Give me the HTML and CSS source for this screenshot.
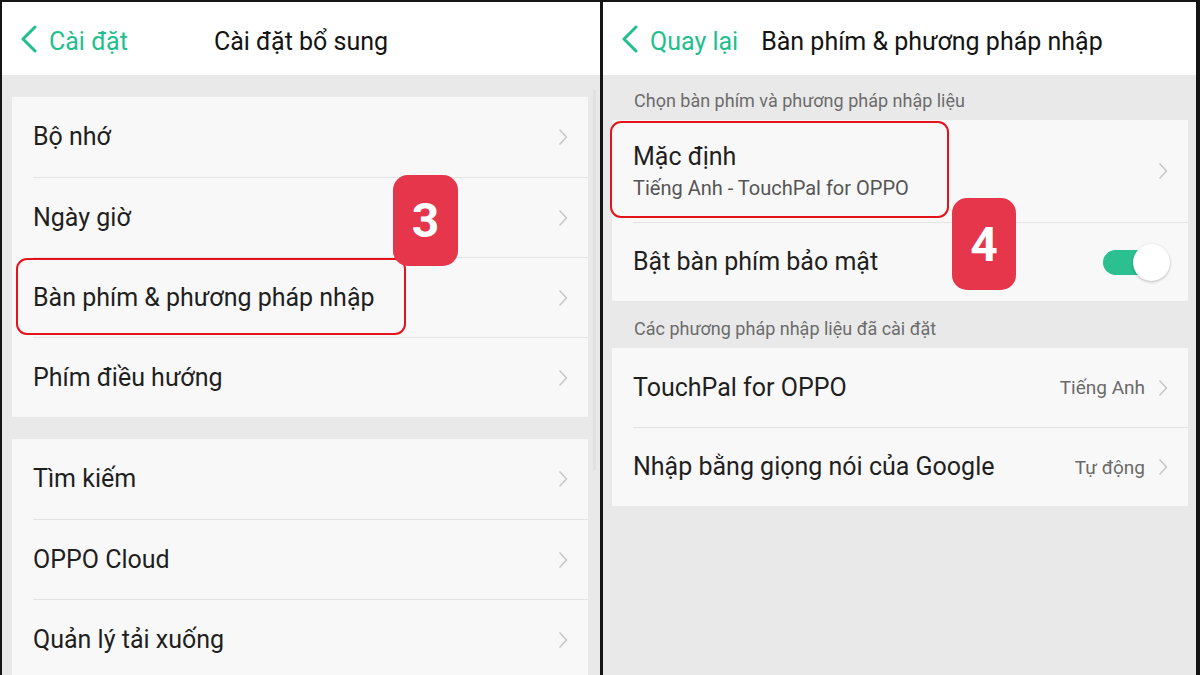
FILE: index.html
```html
<!DOCTYPE html>
<html lang="vi">
<head>
  <meta charset="UTF-8" />
  <title>Cài đặt bàn phím</title>
  <link rel="stylesheet" href="styles.css">
</head>
<body>
  <div class="screen">
    <header class="topbar">
      <a class="back">
        <svg class="back-icon" viewBox="0 0 18 28"><path d="M15 2 L3 14 L15 26" /></svg>
        Cài đặt
      </a>
      <h1 class="title">Cài đặt bổ sung</h1>
      <span></span>
    </header>

    <main class="content content-left">
      <section class="card">
        <div class="row"><span class="label">Bộ nhớ</span><svg class="chev" viewBox="0 0 10 18"><path d="M1.5 1.5 L8.5 9 L1.5 16.5" /></svg></div>
        <div class="row"><span class="label">Ngày giờ</span><svg class="chev" viewBox="0 0 10 18"><path d="M1.5 1.5 L8.5 9 L1.5 16.5" /></svg></div>
        <div class="row"><span class="label">Bàn phím &amp; phương pháp nhập</span><svg class="chev" viewBox="0 0 10 18"><path d="M1.5 1.5 L8.5 9 L1.5 16.5" /></svg></div>
        <div class="row"><span class="label">Phím điều hướng</span><svg class="chev" viewBox="0 0 10 18"><path d="M1.5 1.5 L8.5 9 L1.5 16.5" /></svg></div>
      </section>
      <section class="card">
        <div class="row"><span class="label">Tìm kiếm</span><svg class="chev" viewBox="0 0 10 18"><path d="M1.5 1.5 L8.5 9 L1.5 16.5" /></svg></div>
        <div class="row"><span class="label">OPPO Cloud</span><svg class="chev" viewBox="0 0 10 18"><path d="M1.5 1.5 L8.5 9 L1.5 16.5" /></svg></div>
        <div class="row"><span class="label">Quản lý tải xuống</span><svg class="chev" viewBox="0 0 10 18"><path d="M1.5 1.5 L8.5 9 L1.5 16.5" /></svg></div>
      </section>
    </main>

    <div class="scrollbar"></div>
    <div class="mark mark-left"></div>
    <div class="badge badge-left">3</div>
  </div>

  <div class="screen">
    <header class="topbar topbar-flow">
      <a class="back">
        <svg class="back-icon" viewBox="0 0 18 28"><path d="M15 2 L3 14 L15 26" /></svg>
        Quay lại
      </a>
      <h1 class="title">Bàn phím &amp; phương pháp nhập</h1>
    </header>

    <main class="content content-right">
      <p class="section-label">Chọn bàn phím và phương pháp nhập liệu</p>
      <section class="card">
        <div class="row row-tall">
          <div class="text">
            <span class="label">Mặc định</span>
            <span class="sub">Tiếng Anh - TouchPal for OPPO</span>
          </div>
          <svg class="chev" viewBox="0 0 10 18"><path d="M1.5 1.5 L8.5 9 L1.5 16.5" /></svg>
        </div>
        <div class="row row-switch">
          <span class="label">Bật bàn phím bảo mật</span>
          <span class="switch"><span class="track"></span><span class="knob"></span></span>
        </div>
      </section>

      <p class="section-label">Các phương pháp nhập liệu đã cài đặt</p>
      <section class="card">
        <div class="row row-short">
          <span class="label">TouchPal for OPPO</span>
          <span class="value">Tiếng Anh</span>
          <svg class="chev" viewBox="0 0 10 18"><path d="M1.5 1.5 L8.5 9 L1.5 16.5" /></svg>
        </div>
        <div class="row row-short">
          <span class="label">Nhập bằng giọng nói của Google</span>
          <span class="value">Tự động</span>
          <svg class="chev" viewBox="0 0 10 18"><path d="M1.5 1.5 L8.5 9 L1.5 16.5" /></svg>
        </div>
      </section>
    </main>

    <div class="mark mark-right"></div>
    <div class="badge badge-right">4</div>
  </div>
</body>
</html>
```

FILE: styles.css
```css
body {
  margin: 0;
  height: 675px;
  box-sizing: border-box;
  padding: 2px 4px 0 2px;
  display: flex;
  gap: 3px;
  background: #151515;
  font-family: Roboto, "Noto Sans", sans-serif;
  color: #1f1f1f;
  overflow: hidden;
}

.screen {
  position: relative;
  display: flex;
  flex-direction: column;
  background: #e9e9e9;
  overflow: hidden;
}

.screen:first-child {
  width: 598px;
}

.screen:last-child {
  flex: 1;
}

/* Thanh tiêu đề */
.topbar {
  flex-shrink: 0;
  height: 73px;
  box-sizing: border-box;
  padding: 5px 18px 0;
  background: #fff;
  display: grid;
  grid-template-columns: 1fr auto 1fr;
  align-items: center;
}

.topbar-flow {
  display: flex;
  gap: 23px;
}

.back {
  display: flex;
  align-items: center;
  gap: 11px;
  color: #1fbf8e;
  font-size: 25px;
  white-space: nowrap;
}

.back-icon {
  width: 18px;
  height: 28px;
  margin-top: -4px;
  fill: none;
  stroke: #1fbf8e;
  stroke-width: 3;
  stroke-linecap: round;
  stroke-linejoin: round;
}

.title {
  margin: 0;
  font-size: 25px;
  font-weight: 400;
  color: #141414;
  white-space: nowrap;
}

/* Nội dung */
.content {
  flex: 1;
  display: flex;
  flex-direction: column;
}

.content-left {
  padding: 22px 12px 0 10px;
  gap: 22px;
}

.content-right {
  padding: 0 8px 0 9px;
}

.card {
  flex-shrink: 0;
  background: #f8f8f8;
}

.row {
  height: 80px;
  box-sizing: border-box;
  margin-left: 21px;
  padding-right: 20px;
  display: flex;
  align-items: center;
  gap: 13px;
}

.row + .row {
  border-top: 1px solid #e4e4e4;
}

.row-tall {
  height: 102px;
}

.row-switch {
  height: 79px;
}

.row-short {
  height: 79px;
}

.label {
  flex: 1;
  font-size: 25px;
  line-height: 30px;
  white-space: nowrap;
}

.text {
  flex: 1;
  display: flex;
  flex-direction: column;
  gap: 3px;
}

.sub {
  font-size: 20px;
  line-height: 26px;
  color: #555;
}

.value {
  font-size: 19px;
  color: #6a6a6a;
}

.chev {
  width: 10px;
  height: 18px;
  fill: none;
  stroke: #c6c6c6;
  stroke-width: 1.5;
}

.section-label {
  margin: 0;
  padding: 15px 0 8px 22px;
  font-size: 18px;
  line-height: 22px;
  color: #6c6c6c;
}

.section-label + .card + .section-label {
  padding-top: 17px;
}

/* Công tắc */
.switch {
  display: flex;
  align-items: center;
  margin-right: -2px;
}

.track {
  width: 50px;
  height: 25px;
  border-radius: 13px;
  background: #2cbf8f;
}

.knob {
  width: 37px;
  height: 37px;
  margin-left: -20px;
  border-radius: 50%;
  background: #fff;
  box-shadow: 0 1px 3px rgba(0, 0, 0, 0.25);
}

.scrollbar {
  position: absolute;
  left: 591px;
  top: 88px;
  width: 3px;
  height: 380px;
  background: #e0e0e0;
}

/* Khung đánh dấu và số bước */
.mark {
  position: absolute;
  border: 2px solid #e3141c;
  border-radius: 11px;
}

.mark-left {
  left: 14px;
  top: 256px;
  width: 386px;
  height: 73px;
}

.mark-right {
  left: 7px;
  top: 119px;
  width: 335px;
  height: 93px;
}

.badge {
  position: absolute;
  display: flex;
  align-items: center;
  justify-content: center;
  background: #e5364b;
  border-radius: 15px;
  color: #fff;
  font-size: 48px;
  font-weight: 700;
}

.badge-left {
  left: 391px;
  top: 173px;
  width: 65px;
  height: 91px;
}

.badge-right {
  left: 349px;
  top: 196px;
  width: 64px;
  height: 92px;
}
```
